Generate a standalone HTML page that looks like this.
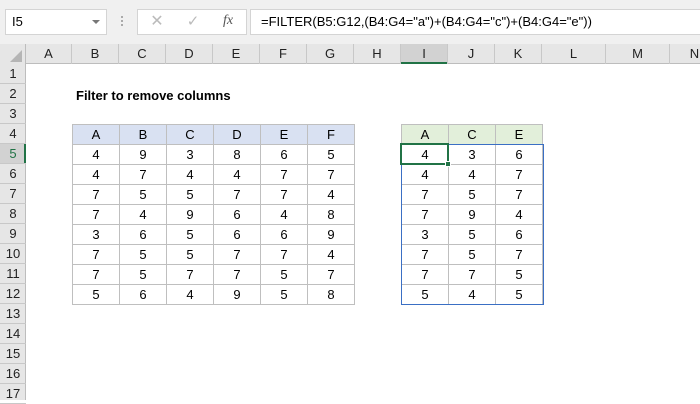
<!DOCTYPE html>
<html><head><style>
body{margin:0;width:700px;height:400px;overflow:hidden;background:#fff;font-family:"Liberation Sans",Calibri,sans-serif;position:relative}
.a{position:absolute;box-sizing:border-box}
.c{position:absolute;box-sizing:border-box;text-align:center;font-size:13px;line-height:20px;color:#000}
</style></head><body>
<div class="a" style="left:0;top:0;width:700px;height:44px;background:#f0f0f0"></div>
<div class="a" style="left:5px;top:9px;width:102px;height:26px;background:#fff;border:1px solid #d4d4d4"></div>
<div class="c" style="left:12px;top:12px;font-size:13px;text-align:left">I5</div>
<div class="a" style="left:92px;top:20px;width:0;height:0;border-left:4px solid transparent;border-right:4px solid transparent;border-top:4px solid #777"></div>
<div class="a" style="left:121px;top:16px;width:2px;height:10px;border-left:2px dotted #aaa"></div>
<div class="a" style="left:137px;top:9px;width:110px;height:26px;background:#fff;border:1px solid #d4d4d4"></div>
<div class="c" style="left:150px;top:12px;width:14px;color:#bbb;font-size:16px">✕</div>
<div class="c" style="left:186px;top:12px;width:14px;color:#bbb;font-size:15px">✓</div>
<div class="c" style="left:220px;top:11px;width:16px;color:#555;font-family:'Liberation Serif',serif;font-style:italic;font-size:14px">fx</div>
<div class="a" style="left:250px;top:9px;width:460px;height:26px;background:#fff;border:1px solid #d4d4d4"></div>
<div class="c" style="left:261px;top:12px;text-align:left;font-size:13px;white-space:nowrap">=FILTER(B5:G12,(B4:G4="a")+(B4:G4="c")+(B4:G4="e"))</div>
<div id="g"></div>
<script>
var g=document.getElementById('g'),h='';
var X=[0,26,72,119,166,213,260,307,354,401,448,495,542,606,670,720];
var L=['','A','B','C','D','E','F','G','H','I','J','K','L','M','N'];
h+='<div class="a" style="left:0;top:44px;width:700px;height:20px;background:#e6e6e6;border-bottom:1px solid #bdbdbd"></div>';
h+='<div class="a" style="left:0;top:44px;width:26px;height:356px;background:#e6e6e6;border-right:1px solid #bdbdbd"></div>';
h+='<div class="a" style="left:10px;top:50px;width:0;height:0;border-left:12px solid transparent;border-bottom:12px solid #b5b5b5"></div>';
h+='<div class="a" style="left:401px;top:44px;width:47px;height:20px;background:#d2d2d2;border-bottom:2px solid #217346"></div>';
h+='<div class="a" style="left:0;top:144px;width:26px;height:20px;background:#d2d2d2;border-right:2px solid #217346"></div>';
for(var i=1;i<15;i++){h+='<div class="c" style="left:'+X[i]+'px;top:44px;width:'+(X[i+1]-X[i])+'px;height:20px;border-right:1px solid #c8c8c8;font-size:13px;color:#222">'+L[i]+'</div>';}
for(var r=1;r<=17;r++){var y=64+(r-1)*20;h+='<div class="c" style="left:0;top:'+y+'px;width:26px;height:20px;border-bottom:1px solid #c8c8c8;font-size:13px;color:#222'+(r==5?';color:#217346':'')+'">'+r+'</div>';}
h+='<div class="c" style="left:76px;top:86px;text-align:left;font-weight:bold;font-size:13px">Filter to remove columns</div>';
var d=[[4,9,3,8,6,5],[4,7,4,4,7,7],[7,5,5,7,7,4],[7,4,9,6,4,8],[3,6,5,6,6,9],[7,5,5,7,7,4],[7,5,7,7,5,7],[5,6,4,9,5,8]];
var hd=['A','B','C','D','E','F'];
for(var j=0;j<6;j++){h+='<div class="c" style="left:'+X[j+2]+'px;top:124px;width:'+(X[j+3]-X[j+2]+1)+'px;height:21px;background:#d9e1f2;border:1px solid #bfbfbf">'+hd[j]+'</div>';
for(var r=0;r<8;r++)h+='<div class="c" style="left:'+X[j+2]+'px;top:'+(144+r*20)+'px;width:'+(X[j+3]-X[j+2]+1)+'px;height:21px;border:1px solid #bfbfbf">'+d[r][j]+'</div>';}
var sel=[0,2,4],hd2=['A','C','E'];
for(var k=0;k<3;k++){var x=X[k+9],w=X[k+10]-x+1;h+='<div class="c" style="left:'+x+'px;top:124px;width:'+w+'px;height:21px;background:#e2efda;border:1px solid #bfbfbf">'+hd2[k]+'</div>';
for(var r=0;r<8;r++)h+='<div class="c" style="left:'+x+'px;top:'+(144+r*20)+'px;width:'+w+'px;height:21px;border:1px solid #bfbfbf">'+d[r][sel[k]]+'</div>';}
h+='<div class="a" style="left:401px;top:144px;width:143px;height:161px;border:1px solid #3a6fc4"></div>';
h+='<div class="a" style="left:400px;top:143px;width:49px;height:22px;border:2px solid #217346"></div>';
h+='<div class="a" style="left:445px;top:161px;width:6px;height:6px;background:#217346;border:1px solid #fff"></div>';
g.innerHTML=h;
</script>
</body></html>
